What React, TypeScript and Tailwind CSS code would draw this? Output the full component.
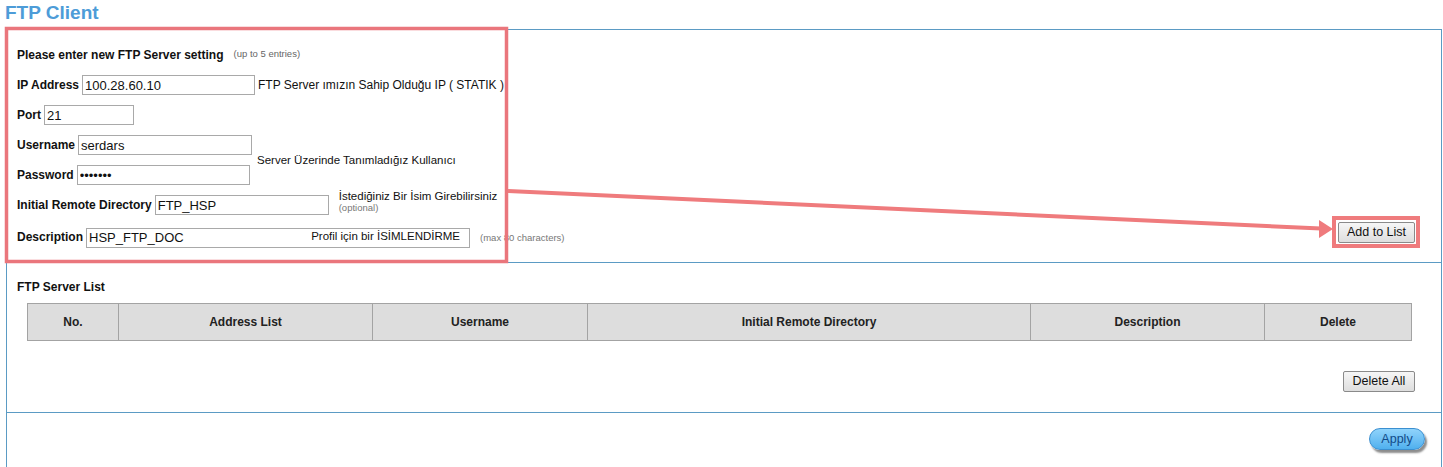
const cols: Array<{ label: string; w: number }> = [
  { label: "No.", w: 91 },
  { label: "Address List", w: 254 },
  { label: "Username", w: 215 },
  { label: "Initial Remote Directory", w: 443 },
  { label: "Description", w: 234 },
  { label: "Delete", w: 147 },
];

const inputCls =
  "h-[20px] border border-[#a9a9a9] bg-white px-[2px] text-[13px] text-[#111] outline-none font-['Liberation_Sans',Arial,sans-serif]";

function Label({ children }: { children: React.ReactNode }) {
  return <span className="font-bold text-[12px] text-[#111] mr-[3px]">{children}</span>;
}

function GrayButton({ children, className = "" }: { children: React.ReactNode; className?: string }) {
  return (
    <button
      className={`h-[21px] px-[6px] border border-[#8a8a8a] rounded-[2px] bg-gradient-to-b from-[#f6f6f6] to-[#dedede] text-[12.5px] text-[#111] leading-none ${className}`}
    >
      {children}
    </button>
  );
}

function Annotations() {
  return (
    <svg
      className="absolute left-0 top-0 pointer-events-none"
      width="1443"
      height="467"
      viewBox="0 0 1443 467"
    >
      <rect x="6.5" y="28.5" width="500" height="233" fill="none" stroke="#ea767c" strokeWidth="3.5" />
      <line x1="508" y1="191" x2="1321" y2="228.5" stroke="#ef7b7d" strokeWidth="4" />
      <polygon points="1319,220 1333,229 1319,238" fill="#ef7b7d" />
      <rect x="1334" y="218" width="84" height="28" fill="none" stroke="#ef7b7d" strokeWidth="4" />
    </svg>
  );
}

export default function App() {
  return (
    <div className="relative w-[1443px] h-[467px] overflow-hidden bg-white font-['Liberation_Sans',Arial,sans-serif] text-[#111]">
      <div className="h-[29px] pl-[5px] pt-[1px] text-[19px] font-bold text-[#4d9cd8] leading-[24px]">FTP Client</div>

      <div className="ml-[6px] w-[1436px] border-x border-t border-[#5b9bc4]">
        {/* settings */}
        <div className="flex justify-between h-[232px]">
          <div className="pl-[10px] pt-[9px]">
            <div className="h-[31px] flex items-center">
              <span className="font-bold text-[12px]">Please enter new FTP Server setting</span>
              <span className="ml-[10px] text-[9.5px] text-[#666]">(up to 5 entries)</span>
            </div>
            <div className="h-[30px] flex items-center">
              <Label>IP Address</Label>
              <input className={`${inputCls} w-[173px]`} defaultValue="100.28.60.10" />
              <span className="ml-[3px] text-[12px]">FTP Server ımızın Sahip Olduğu IP ( STATIK )</span>
            </div>
            <div className="h-[30px] flex items-center">
              <Label>Port</Label>
              <input className={`${inputCls} w-[90px]`} defaultValue="21" />
            </div>
            <div className="flex items-center">
              <div>
                <div className="h-[30px] flex items-center">
                  <Label>Username</Label>
                  <input className={`${inputCls} w-[174px]`} defaultValue="serdars" />
                </div>
                <div className="h-[30px] flex items-center">
                  <Label>Password</Label>
                  <input className={`${inputCls} w-[173px]`} type="password" defaultValue="1234567" />
                </div>
              </div>
              <span className="ml-[5px] mt-[1px] text-[11.5px]">Server Üzerinde Tanımladığız Kullanıcı</span>
            </div>
            <div className="h-[30px] flex items-center">
              <Label>Initial Remote Directory</Label>
              <input className={`${inputCls} w-[174px]`} defaultValue="FTP_HSP" />
              <div className="ml-[10px] self-start mt-[1px] leading-[11px]">
                <div className="text-[11.5px]">İstediğiniz Bir İsim Girebilirsiniz</div>
                <div className="text-[9.5px] text-[#777]">(optional)</div>
              </div>
            </div>
            <div className="h-[30px] mt-[2px] flex items-center">
              <Label>Description</Label>
              <div className="relative">
                <input className={`${inputCls} w-[384px]`} defaultValue="HSP_FTP_DOC" />
                <span className="absolute right-[10px] top-[3px] text-[11.5px]">Profil için bir İSİMLENDİRME</span>
              </div>
              <span className="ml-[10px] mt-[2px] text-[9.5px] text-[#777]">(max 80 characters)</span>
            </div>
          </div>
          <div className="self-end mb-[19px] mr-[26px]">
            <GrayButton className="w-[77px]">Add to List</GrayButton>
          </div>
        </div>

        {/* list */}
        <div className="border-t border-[#5b9bc4] pt-[16px] pb-[20px]">
          <div className="pl-[10px] h-[16px] leading-[16px] font-bold text-[12px]">FTP Server List</div>
          <table className="ml-[20px] mt-[8px] w-[1384px] table-fixed border-collapse">
            <colgroup>
              {cols.map((c) => (
                <col key={c.label} style={{ width: c.w }} />
              ))}
            </colgroup>
            <thead>
              <tr className="h-[37px] bg-[#dddddd]">
                {cols.map((c) => (
                  <th key={c.label} className="border border-[#a3a3a3] text-[12px] font-bold text-[#222] text-center">
                    {c.label}
                  </th>
                ))}
              </tr>
            </thead>
          </table>
          <div className="flex justify-end mt-[30px] mr-[26px]">
            <GrayButton className="w-[72px] h-[20px]">Delete All</GrayButton>
          </div>
        </div>

        {/* apply */}
        <div className="border-t border-[#5b9bc4] h-[60px] flex justify-end items-start pt-[15px] pr-[16px]">
          <button className="w-[56px] h-[22px] rounded-full border border-[#3b8fd0] bg-gradient-to-b from-[#8fd3fb] to-[#4fb0ee] text-[12.5px] text-[#124a88] leading-none shadow-[2px_3px_2px_rgba(0,0,0,0.45)]">
            Apply
          </button>
        </div>
      </div>

      <Annotations />
    </div>
  );
}
